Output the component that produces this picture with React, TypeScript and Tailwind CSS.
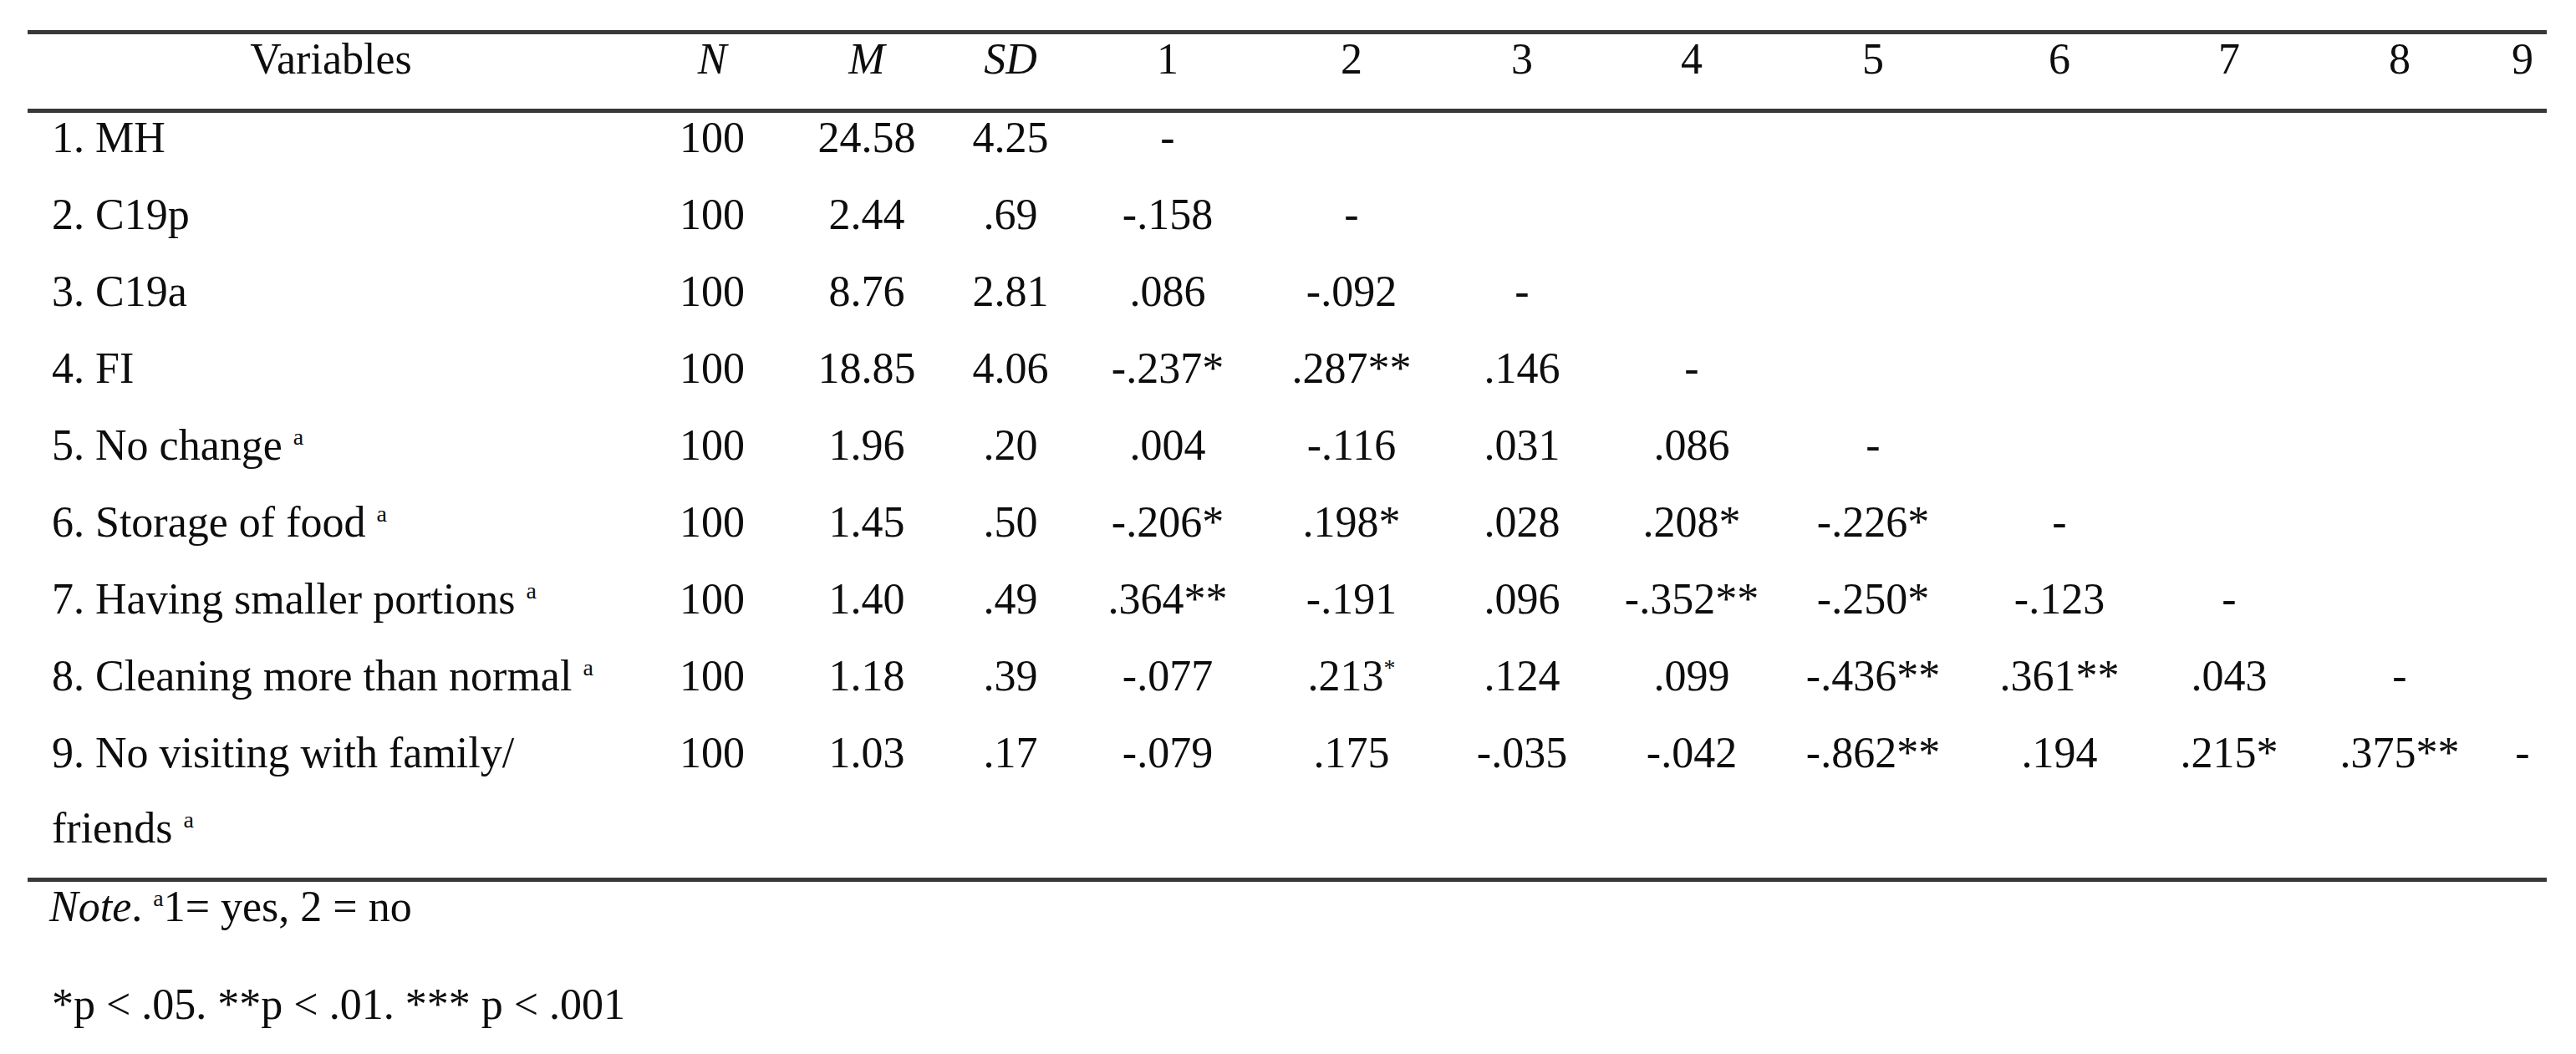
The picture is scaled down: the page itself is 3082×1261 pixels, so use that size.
import React from "react";

const COLS =
  "grid grid-cols-[726px_186px_184px_160px_216px_224px_184px_222px_212px_234px_172px_236px_58px]";

type Cell = string | { v: string; sup: string };

const Sup = ({ children }: { children: React.ReactNode }) => (
  <span className="relative -top-[18px] text-[28px] leading-none">{children}</span>
);

const rows: { label: React.ReactNode; cells: Cell[]; tall?: boolean }[] = [
  { label: "1. MH", cells: ["100", "24.58", "4.25", "-"] },
  { label: "2. C19p", cells: ["100", "2.44", ".69", "-.158", "-"] },
  { label: "3. C19a", cells: ["100", "8.76", "2.81", ".086", "-.092", "-"] },
  { label: "4. FI", cells: ["100", "18.85", "4.06", "-.237*", ".287**", ".146", "-"] },
  {
    label: (
      <>
        5. No change <Sup>a</Sup>
      </>
    ),
    cells: ["100", "1.96", ".20", ".004", "-.116", ".031", ".086", "-"],
  },
  {
    label: (
      <>
        6. Storage of food <Sup>a</Sup>
      </>
    ),
    cells: ["100", "1.45", ".50", "-.206*", ".198*", ".028", ".208*", "-.226*", "-"],
  },
  {
    label: (
      <>
        7. Having smaller portions <Sup>a</Sup>
      </>
    ),
    cells: ["100", "1.40", ".49", ".364**", "-.191", ".096", "-.352**", "-.250*", "-.123", "-"],
  },
  {
    label: (
      <>
        8. Cleaning more than normal <Sup>a</Sup>
      </>
    ),
    cells: [
      "100",
      "1.18",
      ".39",
      "-.077",
      { v: ".213", sup: "*" },
      ".124",
      ".099",
      "-.436**",
      ".361**",
      ".043",
      "-",
    ],
  },
  {
    label: (
      <div className="flex flex-col">
        <div className="leading-[60px]">9. No visiting with family/</div>
        <div className="leading-[60px] mt-[30px]">
          friends <Sup>a</Sup>
        </div>
      </div>
    ),
    cells: [
      "100",
      "1.03",
      ".17",
      "-.079",
      ".175",
      "-.035",
      "-.042",
      "-.862**",
      ".194",
      ".215*",
      ".375**",
      "-",
    ],
    tall: true,
  },
];

const Rule = () => <div className="h-[5px] bg-[#383838] w-full" />;

export default function App() {
  return (
    <div
      className="w-[3082px] h-[1261px] bg-white text-[#0d0d0d] text-[52px] overflow-hidden"
      style={{ fontFamily: '"Liberation Serif", "Times New Roman", serif' }}
    >
      <div className="ml-[33px] w-[3014px] pt-[36px]">
        <Rule />
        <div className={`${COLS} h-[89px] leading-[60px] text-center`}>
          <div>Variables</div>
          <div className="italic">N</div>
          <div className="italic">M</div>
          <div className="italic">SD</div>
          {["1", "2", "3", "4", "5", "6", "7", "8", "9"].map((h) => (
            <div key={h}>{h}</div>
          ))}
        </div>
        <Rule />
        {rows.map((r, i) => (
          <div
            key={i}
            className={`${COLS} ${r.tall ? "h-[179px]" : "h-[92px]"} leading-[60px]`}
          >
            <div className="pl-[29px] whitespace-nowrap">{r.label}</div>
            {r.cells.map((c, j) => (
              <div key={j} className="text-center whitespace-nowrap">
                {typeof c === "string" ? (
                  c
                ) : (
                  <>
                    {c.v}
                    <Sup>{c.sup}</Sup>
                  </>
                )}
              </div>
            ))}
          </div>
        ))}
        <Rule />
        <div className="pl-[26px] leading-[60px]">
          <span className="italic">Note</span>. <Sup>a</Sup>1= yes, 2 = no
        </div>
        <div className="pl-[29px] leading-[60px] mt-[57px]">
          *p &lt; .05. **p &lt; .01. *** p &lt; .001
        </div>
      </div>
    </div>
  );
}
